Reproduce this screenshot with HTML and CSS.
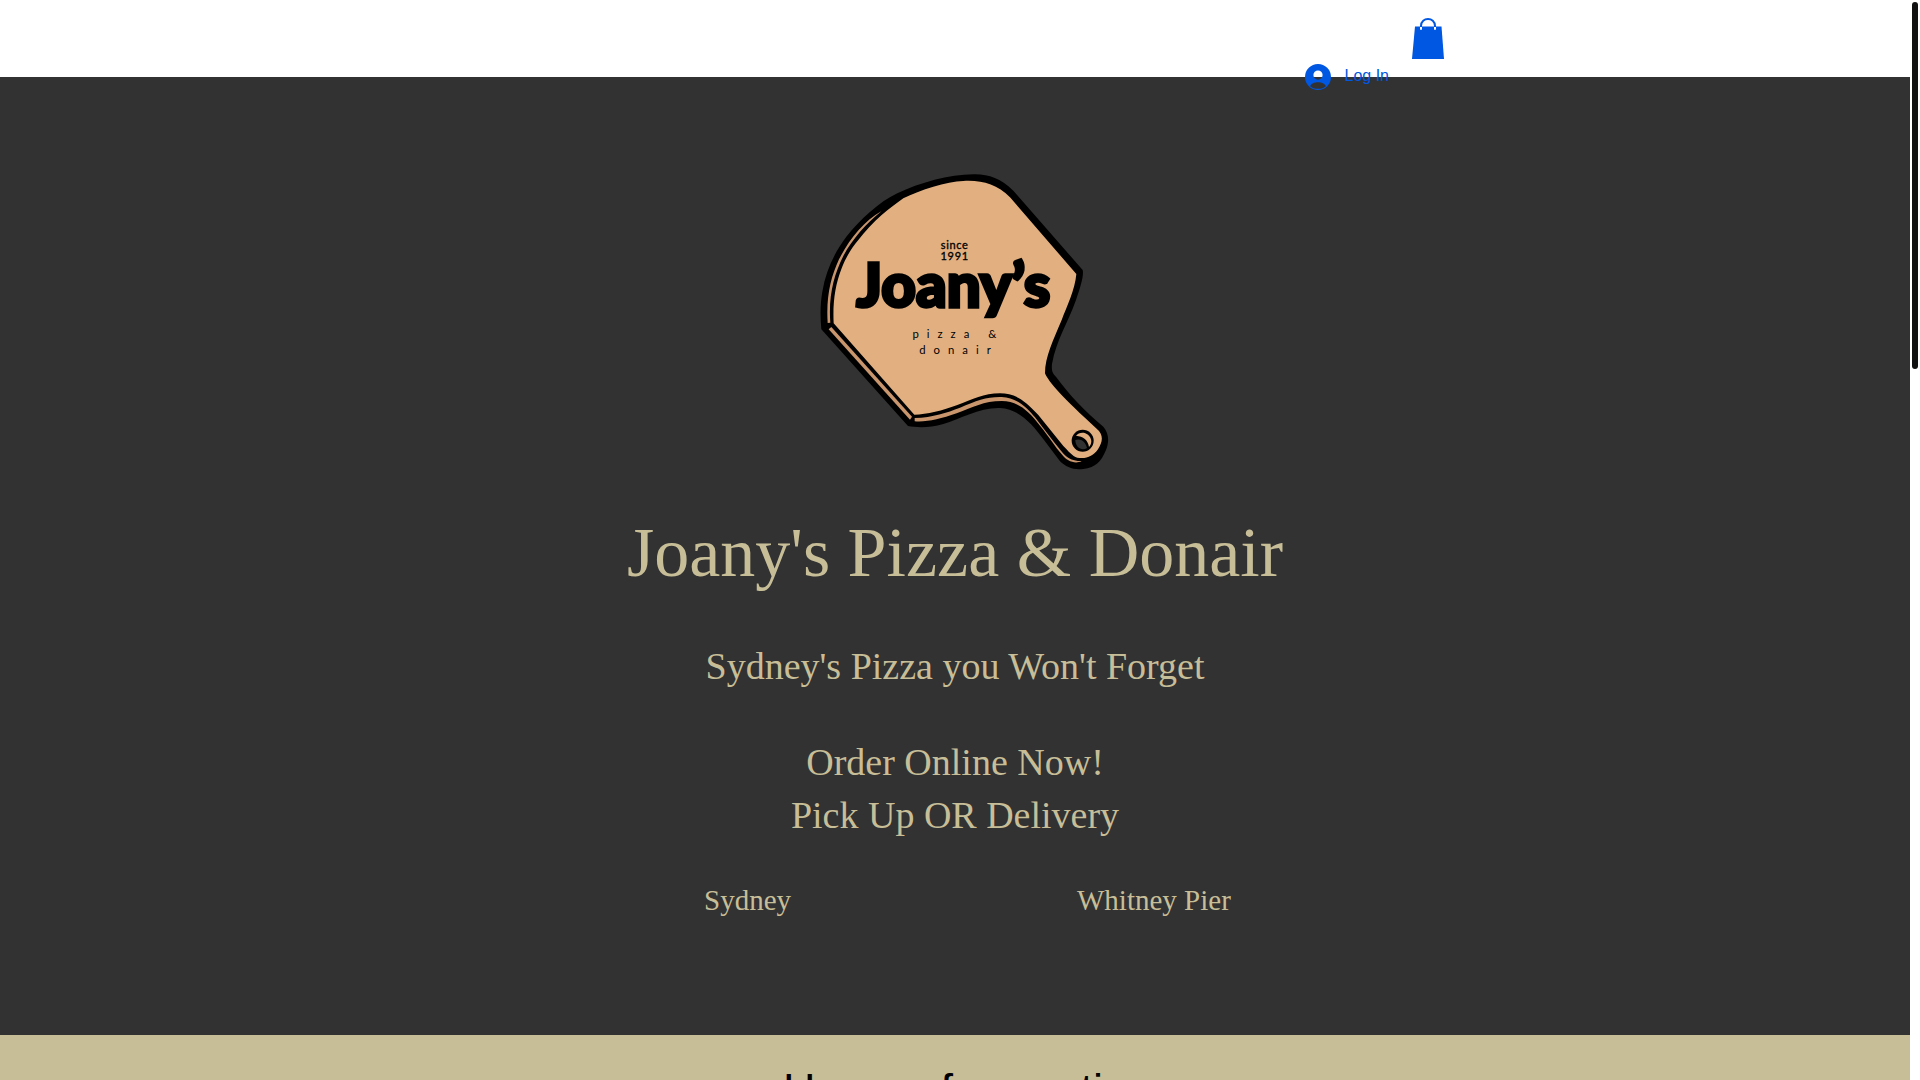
FILE: index.html
```html
<!DOCTYPE html>
<html lang="en">
<head>
  <meta charset="UTF-8">
  <meta name="viewport" content="width=device-width, initial-scale=1.0">
  <title>Joany's Pizza &amp; Donair</title>
  <link rel="stylesheet" href="styles.css">
</head>
<body>
  <div class="page">
    <header class="header">
      <div class="container header-inner">
        <button class="login" type="button">
          <svg class="avatar" viewBox="0 0 26 26" aria-hidden="true">
            <path fill="currentColor" fill-rule="evenodd" d="M13 0a13 13 0 1 1 0 26a13 13 0 0 1 0-26zM13 6.5a4.6 4.6 0 1 0 0 9.2a4.6 4.6 0 0 0 0-9.2zM5.2 22.2C8 25.6 18 25.6 20.8 22.2C19 16.9 7 16.9 5.2 22.2z"/>
          </svg>
          <span>Log In</span>
        </button>
        <a class="cart" href="#cart" aria-label="Cart">
          <svg viewBox="0 0 32 41" aria-hidden="true">
            <path fill="currentColor" d="M3 8.500H29.500L32 41H0z"/>
            <path fill="none" stroke="#fff" stroke-width="2" stroke-linecap="round" d="M9 8.500V11M23 8.500V11"/>
            <path fill="none" stroke="currentColor" stroke-width="2" d="M9 9V8C9 -1.300 23 -1.300 23 8V9"/>
          </svg>
        </a>
      </div>
    </header>

    <main>
      <section class="hero">
        <svg class="logo" viewBox="-15 0 960 960" role="img" aria-label="Joany's pizza and donair, since 1991">
          <!-- board outline -->
          <path d="M64 508C60 465 61 430 67 395C77 335 102 279 139 230C180 180 236 126 292 100C360 68 450 42 525 43C570 44 600 55 640 92L848 330C852 345 842 380 828 420C803 490 769 540 756 612C754 635 758 640 769 652C804 700 854 755 910 800C927 820 928 845 918 870C903 905 888 922 850 927C820 931 798 921 780 904L732 840C697 793 658 747 600 744C540 742 480 777 430 792C390 804 350 803 324 798Z"/>
          <!-- top face -->
          <path class="wood" d="M101 490C98 430 105 375 125 325C140 286 157 262 175 240C195 214 220 187 245 165C268 146 290 130 310 115C360 90 440 65 490 63C545 60 590 72 630 112L829 342C825 390 800 440 785 480C760 540 735 590 735 640C745 665 790 715 890 806C912 824 908 846 894 868C880 889 857 898 832 893C817 889 804 872 790 858L715 765C670 715 640 700 600 700C550 700 520 718 470 736C430 751 380 764 343 764Z"/>
          <!-- edges -->
          <path class="edge" d="M83 489C78 410 92 352 117 298C147 239 190 184 245 153C200 190 157 236 130 288C101 345 85 410 91 488Z"/>
          <path class="edge" d="M86 508L94 501L336 770L330 779Z"/>
          <path class="edge" d="M344 774C400 772 440 758 480 743C530 722 560 710 605 711C650 713 680 742 705 772C730 805 755 838 783 872C798 890 812 903 845 903C825 914 800 902 787 885C765 860 745 827 720 797C685 752 655 724 605 723C550 723 520 742 470 760C420 777 380 787 344 784Z"/>
          <circle cx="848" cy="842" r="33"/>
          <path class="wood" d="M828 827C840 812 870 816 874 843C874 851 871 857 867 861C864 840 850 829 828 827Z"/>
          <path class="hole" d="M826 840C842 834 856 845 861 864C845 874 826 862 826 840Z"/>
          <text class="logo-since" x="464" y="266">since</text>
          <text class="logo-since" x="464" y="300">1991</text>
          <text class="logo-name" x="460" y="442">Joany’s</text>
          <text class="logo-sub" x="475" y="534">pizza &amp;</text>
          <text class="logo-sub" x="477" y="583">donair</text>
        </svg>

        <h1 class="title">Joany's Pizza &amp; Donair</h1>
        <h2 class="tagline">Sydney's Pizza you Won't Forget</h2>
        <h2 class="order">Order Online Now!<br>Pick Up OR Delivery</h2>

        <div class="locations">
          <h3>Sydney</h3>
          <h3>Whitney Pier</h3>
        </div>
      </section>

      <section class="hours">
        <h2 class="container">Hours of operation</h2>
      </section>
    </main>
  </div>

  <div class="scrollbar" aria-hidden="true"><div class="thumb"></div></div>
</body>
</html>
```

FILE: styles.css
```css
* {
  margin: 0;
  padding: 0;
  box-sizing: border-box;
}

body {
  display: flex;
  height: 100vh;
  overflow: hidden;
  background: #fff;
  font-family: "Liberation Sans", Arial, sans-serif;
}

.page {
  flex: 1;
  overflow-y: auto;
  scrollbar-width: none;
}

.container {
  max-width: 980px;
  margin: 0 auto;
}

/* Header */
.header {
  position: relative;
  z-index: 1;
  height: 77px;
  color: #0057e1;
}

.header-inner {
  display: flex;
  justify-content: flex-end;
  align-items: flex-start;
  gap: 23px;
  padding-right: 1px;
}

/* the login button hangs over the hero */
.login {
  display: flex;
  align-items: center;
  gap: 14px;
  margin-top: 64px;
  border: none;
  background: none;
  color: inherit;
  font: 16px "Liberation Sans", Arial, sans-serif;
  line-height: 24px;
  cursor: pointer;
}

.login span {
  padding-bottom: 2px;
}

.avatar {
  width: 26px;
  height: 26px;
}

.cart {
  margin-top: 18px;
  color: inherit;
}

.cart svg {
  display: block;
  width: 32px;
  height: 41px;
}

/* Hero */
.hero {
  padding: 83px 0 114px;
  background: #323232;
  color: #c7be98;
  font-family: "Liberation Serif", "Times New Roman", serif;
  text-align: center;
}

.hero h1,
.hero h2,
.hero h3 {
  font-weight: normal;
}

.logo {
  display: block;
  width: 320px;
  height: 320px;
  margin: 0 auto;
}

.wood {
  fill: #e2b080;
}

.edge {
  fill: #c8956d;
}

.hole {
  fill: #323232;
}

.logo text {
  font-family: Lato, sans-serif;
  text-anchor: middle;
}

.logo .logo-since {
  font-size: 33px;
  letter-spacing: 2px;
  stroke: #000;
  stroke-width: 1px;
}

.logo .logo-name {
  font-size: 180px;
  font-weight: 900;
  stroke: #000;
  stroke-width: 10px;
}

.logo .logo-sub {
  font-size: 34px;
  font-weight: 400;
  letter-spacing: 24px;
}

.title {
  margin-top: 24px;
  font-size: 70px;
  line-height: 98px;
}

.tagline,
.order {
  font-size: 38px;
  line-height: 53px;
}

.tagline {
  margin-top: 38px;
}

.order {
  margin-top: 43px;
}

.locations {
  display: grid;
  grid-template-columns: 373px max-content;
  width: 502px;
  margin: 38px auto 0;
  text-align: left;
}

.locations h3 {
  font-size: 29px;
  line-height: 41px;
}

/* Hours */
.hours {
  padding: 29px 0;
  background: #c7be98;
}

.hours h2 {
  padding-left: 26px;
  font-size: 45px;
  font-weight: normal;
  text-align: center;
}

/* Scrollbar */
.scrollbar {
  width: 10px;
  padding: 2px;
  background: #fff;
}

.thumb {
  width: 6px;
  height: 34vh;
  border-radius: 3px;
  background: #111;
}
```
